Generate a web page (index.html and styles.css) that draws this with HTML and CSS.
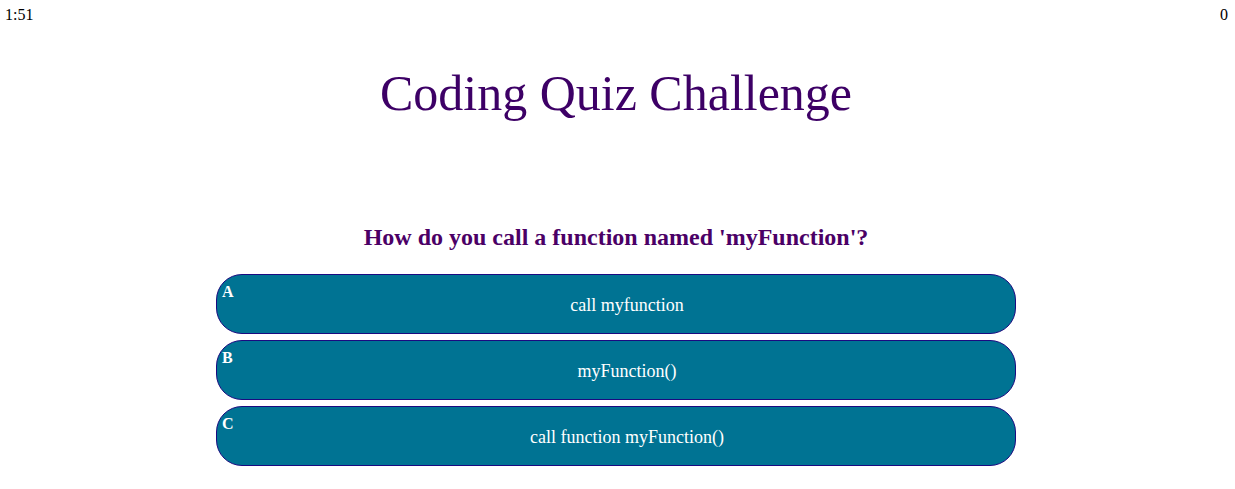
FILE: index.html
```html
<!DOCTYPE html>
<html>
<head>
<meta charset="utf-8">
<link rel="stylesheet" href="styles.css">
</head>
<body>
<header class="topbar">
  <span class="timer">1:51</span>
  <span class="score">0</span>
</header>
<div class="content">
  <h1 class="title">Coding Quiz Challenge</h1>
  <main class="quiz">
    <h2 class="question">How do you call a function named 'myFunction'?</h2>
    <div class="answers">
      <button class="answer"><span class="letter">A</span><span class="text">call myfunction</span></button>
      <button class="answer"><span class="letter">B</span><span class="text">myFunction()</span></button>
      <button class="answer"><span class="letter">C</span><span class="text">call function myFunction()</span></button>
    </div>
  </main>
</div>
</body>
</html>
```
FILE: styles.css
```css
* { box-sizing: border-box; }
html, body { margin: 0; padding: 0; background: #fff; }
body {
  font-family: "Liberation Serif", "Times New Roman", serif;
  font-size: 16px;
  color: #000;
}
.topbar {
  display: flex;
  justify-content: space-between;
  padding: 6px 7px 0 5px;
  line-height: 18px;
}
.content {
  padding-right: 3px;
}
.title {
  margin: 40px 0 0;
  text-align: center;
  font-weight: normal;
  font-size: 50px;
  line-height: 58px;
  color: #3d0066;
}
.quiz {
  width: 800px;
  margin: 101px auto 0;
}
.question {
  margin: 0 0 23px;
  text-align: center;
  font-size: 24px;
  line-height: 28px;
  font-weight: bold;
  color: #4b0066;
}
.answers {
  display: flex;
  flex-direction: column;
  gap: 6px;
}
.answer {
  position: relative;
  display: flex;
  align-items: center;
  justify-content: center;
  height: 60px;
  width: 100%;
  background: #007393;
  border: 1px solid #1a0a80;
  border-radius: 26px;
  color: #fff;
  font-family: inherit;
  font-size: 18px;
  padding: 0 0 0 22px;
}
.letter {
  position: absolute;
  left: 5px;
  top: 8px;
  font-weight: bold;
  font-size: 16px;
  line-height: 18px;
}
.text { padding-top: 3px; }
```
